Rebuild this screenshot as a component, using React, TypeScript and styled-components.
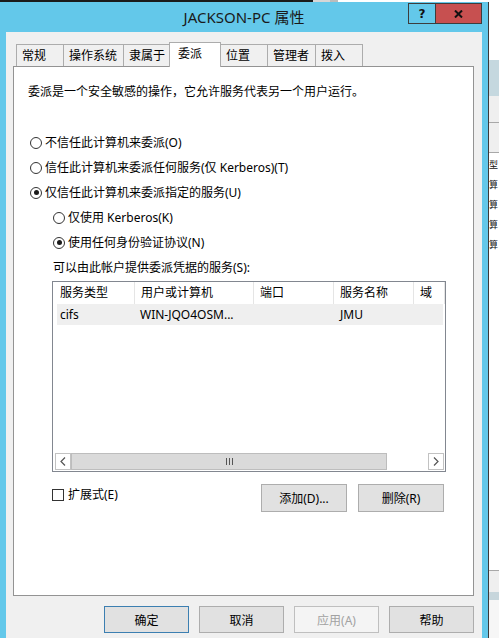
import React from "react";
import styled, { createGlobalStyle, css } from "styled-components";

const GlobalStyle = createGlobalStyle`
  html, body { margin: 0; padding: 0; background: #ffffff; overflow: hidden; }
  body {
    font-family: "Noto Sans", "Noto Sans CJK SC", sans-serif;
    font-size: 12px;
    color: #000;
  }
  * { box-sizing: border-box; }
`;

const Page = styled.div`
  width: 499px;
  height: 638px;
  display: flex;
  flex-direction: column;
  overflow: hidden;
`;

const TopStrip = styled.div`
  display: flex;
  height: 2px;
  flex: none;
`;

const Seg = styled.div<{ $w?: number; $h?: number; $c: string }>`
  flex: ${(p) => (p.$w || p.$h ? "none" : "1")};
  ${(p) => (p.$w ? `width: ${p.$w}px;` : "")}
  ${(p) => (p.$h ? `height: ${p.$h}px;` : "")}
  background: ${(p) => p.$c};
`;

const Main = styled.div`
  display: flex;
  flex: 1;
  min-height: 0;
`;

const Window = styled.div`
  width: 489px;
  flex: none;
  display: flex;
  flex-direction: column;
  background: #63c8ea;
  border-right: 1px solid #3a3a3a;
  padding: 0 6px;
`;

const TitleBar = styled.div`
  display: grid;
  height: 30px;
  flex: none;
  & > * { grid-area: 1 / 1; }
`;

const Title = styled.div`
  justify-self: center;
  align-self: center;
  font-size: 15px;
  line-height: 20px;
  color: #1a1a1a;
`;

const Controls = styled.div`
  justify-self: end;
  align-self: start;
  margin-top: 1px;
  display: flex;
  height: 21px;
  border: 1px solid #3d3d3d;
`;

const CtlButton = styled.div<{ $close?: boolean }>`
  display: flex;
  align-items: center;
  justify-content: center;
  height: 100%;
  width: ${(p) => (p.$close ? "45px" : "27px")};
  background: ${(p) => (p.$close ? "#c75050" : "transparent")};
  ${(p) => (!p.$close ? "border-right: 1px solid #3d3d3d;" : "")}
  font-family: "DejaVu Sans", sans-serif;
  font-weight: 700;
  font-size: 12px;
  color: #111;
`;

const Client = styled.div`
  flex: 1;
  background: #f0f0f0;
  padding: 10px 8px 0 7px;
  display: flex;
  flex-direction: column;
`;

const TabStrip = styled.div`
  display: flex;
  align-items: flex-end;
  height: 24px;
  padding-left: 3px;
  position: relative;
  z-index: 1;
`;

const Tab = styled.div<{ $w: number; $active?: boolean }>`
  width: ${(p) => p.$w}px;
  flex: none;
  border: 1px solid #acacac;
  border-bottom: none;
  font-family: "Noto Sans CJK SC", sans-serif;
  font-size: 12px;
  & + & { margin-left: -1px; }
  ${(p) =>
    p.$active
      ? css`
          height: 25px;
          margin-bottom: -1px;
          background: #ffffff;
          padding: 2px 0 0 8px;
          line-height: 16px;
          position: relative;
          z-index: 2;
        `
      : css`
          height: 22px;
          background: #f0f0f0;
          padding-left: 5px;
          line-height: 20px;
        `}
`;

const Panel = styled.div`
  height: 530px;
  flex: none;
  background: #ffffff;
  border: 1px solid #939393;
  display: flex;
  flex-direction: column;
  font-family: "Noto Sans", "Noto Sans CJK SC", sans-serif;
`;

const Description = styled.div`
  margin: 17px 0 0 14px;
  line-height: 16px;
`;

const RadioGroup = styled.div`
  margin-top: 30px;
  display: flex;
  flex-direction: column;
`;

const OptionRow = styled.div<{ $indent: number }>`
  display: flex;
  align-items: center;
  height: 25px;
  padding-left: ${(p) => p.$indent}px;
  gap: 3px;
`;

const Radio = styled.span<{ $checked?: boolean }>`
  width: 12px;
  height: 12px;
  flex: none;
  border-radius: 50%;
  border: 1px solid #333333;
  background: #ffffff;
  display: flex;
  align-items: center;
  justify-content: center;
  &::after {
    content: "";
    width: 5px;
    height: 5px;
    border-radius: 50%;
    background: ${(p) => (p.$checked ? "#1a1a1a" : "transparent")};
  }
`;

const OptionText = styled.span`
  line-height: 16px;
  white-space: nowrap;
`;

const ListBox = styled.div`
  margin: 1px 0 0 38px;
  width: 394px;
  height: 191px;
  border: 1px solid #828790;
  display: flex;
  flex-direction: column;
  background: #ffffff;
  overflow: hidden;
`;

const HeaderRow = styled.div`
  display: flex;
  height: 22px;
  flex: none;
`;

const HeaderCell = styled.div<{ $w?: number; $first?: boolean }>`
  ${(p) => (p.$w ? `width: ${p.$w}px; flex: none;` : "flex: 1;")}
  padding-left: ${(p) => (p.$first ? 7 : 6)}px;
  line-height: 21px;
  border-right: 1px solid #e5e5e5;
  white-space: nowrap;
  overflow: hidden;
`;

const DataRow = styled.div`
  display: flex;
  height: 21px;
  flex: none;
  margin: 0 2px 0 4px;
  background: #efefef;
`;

const DataCell = styled.div<{ $w?: number; $pad: number }>`
  ${(p) => (p.$w ? `width: ${p.$w}px; flex: none;` : "flex: 1;")}
  padding-left: ${(p) => p.$pad}px;
  line-height: 21px;
  white-space: nowrap;
  overflow: hidden;
`;

const ListSpacer = styled.div`
  flex: 1;
`;

const HScroll = styled.div`
  display: flex;
  height: 18px;
  flex: none;
  padding: 0 1px 1px 2px;
`;

const ScrollArrow = styled.div`
  width: 16px;
  flex: none;
  border: 1px solid #c2c2c2;
  background: #ffffff;
  display: flex;
  align-items: center;
  justify-content: center;
`;

const Thumb = styled.div`
  width: 316px;
  flex: none;
  background: #dadada;
  border: 1px solid #bdbdbd;
  display: flex;
  align-items: center;
  justify-content: center;
`;

const Track = styled.div`
  flex: 1;
  background: #ffffff;
`;

const BottomRow = styled.div`
  display: flex;
  align-items: flex-start;
  margin: 12px 0 0 38px;
  width: 392px;
`;

const CheckLabel = styled.div`
  display: flex;
  align-items: center;
  gap: 4px;
  margin-top: 5px;
  height: 12px;
  flex: 1;
`;

const CheckBox = styled.span`
  width: 12px;
  height: 12px;
  flex: none;
  border: 1px solid #333333;
  background: #ffffff;
`;

const Button = styled.div<{ $w?: number; $default?: boolean; $disabled?: boolean; $h?: number }>`
  width: ${(p) => p.$w ?? 85}px;
  height: ${(p) => p.$h ?? 27}px;
  flex: none;
  display: flex;
  align-items: center;
  justify-content: center;
  background: #e1e1e1;
  border: 1px solid #adadad;
  font-family: "Noto Sans", "Noto Sans CJK SC", sans-serif;
  font-size: 12px;
  color: #000;
  ${(p) => p.$default && css`border-color: #3c7fb1;`}
  ${(p) =>
    p.$disabled &&
    css`
      background: #f4f4f4;
      border-color: #bfbfbf;
      color: #a2a2a2;
    `}
`;

const ButtonPair = styled.div`
  display: flex;
  gap: 11px;
`;

const DialogButtons = styled.div`
  display: flex;
  justify-content: flex-end;
  gap: 10px;
  margin-top: 10px;
`;

const RightStrip = styled.div`
  flex: 1;
  display: flex;
  flex-direction: column;
  overflow: hidden;
  background: #ffffff;
`;

const StripLine = styled.div`
  height: 1px;
  flex: none;
  background: #a8a8a8;
`;

const StripList = styled.div`
  flex: none;
  height: 417px;
  background: #ffffff;
  padding-top: 2px;
  display: flex;
  flex-direction: column;
`;

const StripText = styled.div`
  height: 20px;
  line-height: 20px;
  font-family: "Noto Sans CJK SC", sans-serif;
  font-size: 9px;
  white-space: nowrap;
  color: #111;
`;

const tabs = ["常规", "操作系统", "隶属于", "委派", "位置", "管理者", "拨入"];
const tabWidths = [48, 61, 47, 52, 48, 49, 48];

const columns = [
  { label: "服务类型", w: 82 },
  { label: "用户或计算机", w: 119 },
  { label: "端口", w: 80 },
  { label: "服务名称", w: 80 },
  { label: "域" },
];

export default function App() {
  return (
    <Page>
      <GlobalStyle />
      <TopStrip>
        <Seg $w={313} $c="#1b1b1b" />
        <Seg $w={17} $c="#d6d6d6" />
        <Seg $w={8} $c="#bcbcbc" />
        <Seg $c="#ffffff" />
      </TopStrip>
      <Main>
        <Window>
          <TitleBar>
            <Title>JACKSON-PC 属性</Title>
            <Controls>
              <CtlButton>?</CtlButton>
              <CtlButton $close>
                <svg width="9" height="8" viewBox="0 0 9 8">
                  <path d="M1 0.5 L8 7.5 M8 0.5 L1 7.5" stroke="#111" strokeWidth="2" />
                </svg>
              </CtlButton>
            </Controls>
          </TitleBar>
          <Client>
            <TabStrip>
              {tabs.map((t, i) => (
                <Tab key={t} $w={tabWidths[i]} $active={i === 3}>
                  {t}
                </Tab>
              ))}
            </TabStrip>
            <Panel>
              <Description>委派是一个安全敏感的操作，它允许服务代表另一个用户运行。</Description>
              <RadioGroup>
                <OptionRow $indent={16}>
                  <Radio />
                  <OptionText>不信任此计算机来委派(O)</OptionText>
                </OptionRow>
                <OptionRow $indent={16}>
                  <Radio />
                  <OptionText>信任此计算机来委派任何服务(仅 Kerberos)(T)</OptionText>
                </OptionRow>
                <OptionRow $indent={16}>
                  <Radio $checked />
                  <OptionText>仅信任此计算机来委派指定的服务(U)</OptionText>
                </OptionRow>
                <OptionRow $indent={39}>
                  <Radio />
                  <OptionText>仅使用 Kerberos(K)</OptionText>
                </OptionRow>
                <OptionRow $indent={39}>
                  <Radio $checked />
                  <OptionText>使用任何身份验证协议(N)</OptionText>
                </OptionRow>
                <OptionRow $indent={39}>
                  <OptionText>可以由此帐户提供委派凭据的服务(S):</OptionText>
                </OptionRow>
              </RadioGroup>
              <ListBox>
                <HeaderRow>
                  {columns.map((c, i) => (
                    <HeaderCell key={c.label} $w={c.w} $first={i === 0}>
                      {c.label}
                    </HeaderCell>
                  ))}
                </HeaderRow>
                <DataRow>
                  <DataCell $w={78} $pad={3}>cifs</DataCell>
                  <DataCell $w={119} $pad={5}>WIN-JQO4OSM...</DataCell>
                  <DataCell $w={80} $pad={6} />
                  <DataCell $w={80} $pad={6}>JMU</DataCell>
                  <DataCell $pad={6} />
                </DataRow>
                <ListSpacer />
                <HScroll>
                  <ScrollArrow>
                    <svg width="6" height="9" viewBox="0 0 6 9">
                      <path d="M5 0.5 L1 4.5 L5 8.5" fill="none" stroke="#555" strokeWidth="1.2" />
                    </svg>
                  </ScrollArrow>
                  <Thumb>
                    <svg width="7" height="7" viewBox="0 0 7 7">
                      <path d="M0.5 0 V7 M3.5 0 V7 M6.5 0 V7" stroke="#555" strokeWidth="1" />
                    </svg>
                  </Thumb>
                  <Track />
                  <ScrollArrow>
                    <svg width="6" height="9" viewBox="0 0 6 9">
                      <path d="M1 0.5 L5 4.5 L1 8.5" fill="none" stroke="#555" strokeWidth="1.2" />
                    </svg>
                  </ScrollArrow>
                </HScroll>
              </ListBox>
              <BottomRow>
                <CheckLabel>
                  <CheckBox />
                  <OptionText>扩展式(E)</OptionText>
                </CheckLabel>
                <ButtonPair>
                  <Button $w={86} $h={28}>添加(D)...</Button>
                  <Button $w={86} $h={28}>删除(R)</Button>
                </ButtonPair>
              </BottomRow>
            </Panel>
            <DialogButtons>
              <Button $default>确定</Button>
              <Button>取消</Button>
              <Button $disabled>应用(A)</Button>
              <Button>帮助</Button>
            </DialogButtons>
          </Client>
        </Window>
        <RightStrip>
          <Seg $h={58} $c="#ffffff" />
          <Seg $h={36} $c="#c5d8df" />
          <Seg $h={26} $c="#efefef" />
          <StripLine />
          <Seg $h={29} $c="#efefef" />
          <StripLine />
          <StripList>
            <StripText>型</StripText>
            <StripText>算</StripText>
            <StripText>算</StripText>
            <StripText>算</StripText>
            <StripText>算</StripText>
          </StripList>
          <StripLine />
          <Seg $h={21} $c="#efefef" />
          <Seg $h={8} $c="#c7d6dc" />
          <Seg $c="#f6f6f6" />
        </RightStrip>
      </Main>
    </Page>
  );
}
